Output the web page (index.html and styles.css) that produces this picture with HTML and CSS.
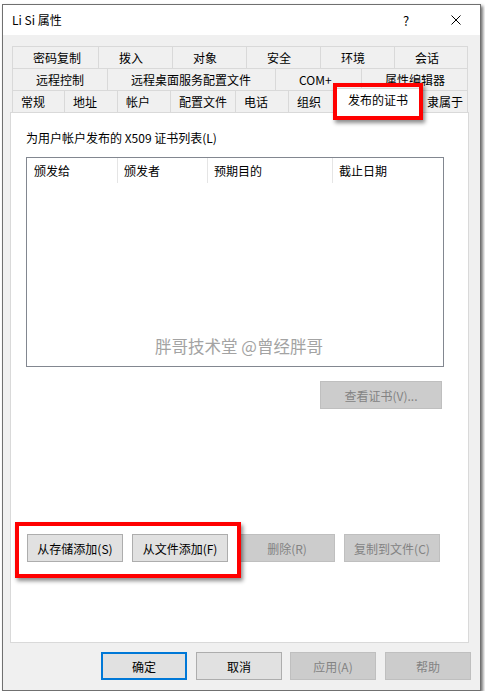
FILE: index.html
```html
<!DOCTYPE html>
<html lang="zh-CN">
<head>
    <meta charset="UTF-8">
    <title>Li Si 属性</title>
    <link rel="stylesheet" href="styles.css">
</head>
<body>
    <div class="window">
        <div class="titlebar">
            <span class="title">Li Si 属性</span>
            <span class="help">?</span>
            <span class="close">
                <svg width="10" height="10" viewBox="0 0 10 10">
                    <path d="M0.5 0.5 L9.5 9.5 M9.5 0.5 L0.5 9.5" stroke="#000" stroke-width="1" fill="none"/>
                </svg>
            </span>
        </div>

        <div class="dialog-body">
            <div class="tabs">
                <div class="tab-row row-1">
                    <div class="tab">密码复制</div>
                    <div class="tab">拨入</div>
                    <div class="tab">对象</div>
                    <div class="tab">安全</div>
                    <div class="tab">环境</div>
                    <div class="tab">会话</div>
                </div>
                <div class="tab-row row-2">
                    <div class="tab">远程控制</div>
                    <div class="tab">远程桌面服务配置文件</div>
                    <div class="tab">COM+</div>
                    <div class="tab">属性编辑器</div>
                </div>
                <div class="tab-row row-3">
                    <div class="tab">常规</div>
                    <div class="tab">地址</div>
                    <div class="tab">帐户</div>
                    <div class="tab">配置文件</div>
                    <div class="tab">电话</div>
                    <div class="tab">组织</div>
                    <div class="tab selected">发布的证书</div>
                    <div class="tab">隶属于</div>
                </div>
            </div>

            <div class="panel">
                <div class="list-label">为用户帐户发布的 X509 证书列表(L)</div>
                <div class="cert-list">
                    <div class="list-header">
                        <div class="col">颁发给</div>
                        <div class="col">颁发者</div>
                        <div class="col">预期目的</div>
                        <div class="col">截止日期</div>
                    </div>
                    <div class="watermark">胖哥技术堂 @曾经胖哥</div>
                </div>

                <div class="view-row">
                    <button class="btn disabled btn-view">查看证书(V)...</button>
                </div>

                <div class="action-row">
                    <button class="btn">从存储添加(S)</button>
                    <button class="btn">从文件添加(F)</button>
                    <button class="btn disabled">删除(R)</button>
                    <button class="btn disabled">复制到文件(C)</button>
                </div>
            </div>

            <div class="dialog-buttons">
                <button class="btn btn-dlg default">确定</button>
                <button class="btn btn-dlg">取消</button>
                <button class="btn btn-dlg disabled">应用(A)</button>
                <button class="btn btn-dlg disabled">帮助</button>
            </div>
        </div>

        <!-- red callouts drawn over the dialog -->
        <div class="highlight hl-tab"></div>
        <div class="highlight hl-add"></div>
    </div>
</body>
</html>
```

FILE: styles.css
```css
* {
    margin: 0;
    padding: 0;
    box-sizing: border-box;
}

body {
    background: #fff;
    padding: 4px 0 0 2px;
    font-family: "Noto Sans CJK SC", "Noto Sans", sans-serif;
    font-size: 12px;
    color: #000;
}

.window {
    position: relative;
    width: 479px;
    height: 687px;
    border: 1px solid #707070;
    box-shadow: 2px 2px 3px rgba(0, 0, 0, 0.55);
    background: #f0f0f0;
}

.titlebar {
    height: 30px;
    background: #fff;
    display: flex;
    align-items: center;
    padding-left: 9px;
}

.title {
    flex: 1;
    line-height: 30px;
}

.help {
    width: 10px;
    margin-right: 38px;
    font-size: 13px;
}

.close {
    display: flex;
    margin-right: 19px;
}

.dialog-body {
    padding: 11px 0 0 7px;
}

/* tabs */
.tabs {
    margin-left: 2px;
    width: 456px;
}

.tab-row {
    display: grid;
    height: 22px;
}

.row-1 { grid-template-columns: 86px 74px 74px 74px 74px 1fr; }
.row-2 { grid-template-columns: 95px 168px 86px 1fr; }
.row-3 { grid-template-columns: 52px 53px 53px 65px 53px 49px 81px 1fr; }

.tab {
    border-top: 1px solid #d9d9d9;
    border-left: 1px solid #d9d9d9;
    line-height: 21px;
    white-space: nowrap;
    overflow: hidden;
}

.tab:last-child {
    border-right: 1px solid #d9d9d9;
}

.row-1 .tab { padding-left: 20px; }
.row-2 .tab { padding-left: 23px; }
.row-3 .tab { padding-left: 8px; }

.row-3 .tab.selected {
    position: relative;
    z-index: 1;
    margin: -2px -2px -1px -2px;
    padding-left: 12px;
    background: #fff;
    border-right: 1px solid #d9d9d9;
}

/* panel */
.panel {
    width: 459px;
    height: 531px;
    background: #fff;
    border: 1px solid #d9d9d9;
    padding: 17px 0 0 15px;
}

.list-label {
    line-height: 16px;
    margin-bottom: 11px;
}

.cert-list {
    position: relative;
    width: 418px;
    height: 210px;
    border: 1px solid #828790;
}

.list-header {
    display: grid;
    grid-template-columns: 91px 90px 125px 1fr;
    height: 25px;
}

.list-header .col {
    line-height: 25px;
    padding-left: 6px;
    border-right: 1px solid #e5e5e5;
}

.list-header .col:first-child {
    padding-left: 7px;
}

.list-header .col:last-child {
    border-right: none;
}

.watermark {
    position: absolute;
    top: 178px;
    left: 0;
    right: 0;
    padding-left: 8px;
    text-align: center;
    font-size: 16.5px;
    line-height: 20px;
    color: #a3a3a3;
}

/* buttons */
.btn {
    height: 28px;
    font-family: inherit;
    font-size: 12px;
    color: #000;
    background: #e1e1e1;
    border: 1px solid #adadad;
}

.btn.disabled {
    background: #cccccc;
    border-color: #bfbfbf;
    color: #838383;
}

.view-row {
    display: flex;
    justify-content: flex-end;
    width: 418px;
    margin-top: 14px;
}

.btn-view {
    width: 122px;
    margin-right: 2px;
}

.action-row {
    display: flex;
    margin-top: 125px;
    padding-left: 1px;
}

.action-row .btn {
    width: 96px;
}

.action-row .btn:nth-child(2) { margin-left: 9px; }
.action-row .btn:nth-child(3) { margin-left: 11px; }
.action-row .btn:nth-child(4) { margin-left: 9px; }

.dialog-buttons {
    display: flex;
    justify-content: flex-end;
    margin-top: 9px;
    padding-right: 9px;
}

.btn-dlg {
    width: 86px;
}

.btn-dlg:nth-child(2),
.btn-dlg:nth-child(4) { margin-left: 9px; }
.btn-dlg:nth-child(3) { margin-left: 8px; }

.btn-dlg.default {
    border: 2px solid #0078d7;
}

/* red callouts */
.highlight {
    position: absolute;
    border: 4px solid #f00;
    box-shadow: 2px 3px 4px rgba(0, 0, 0, 0.45);
    z-index: 2;
}

.hl-tab {
    left: 330px;
    top: 78px;
    width: 90px;
    height: 37px;
}

.hl-add {
    left: 12px;
    top: 517px;
    width: 226px;
    height: 56px;
}
```
